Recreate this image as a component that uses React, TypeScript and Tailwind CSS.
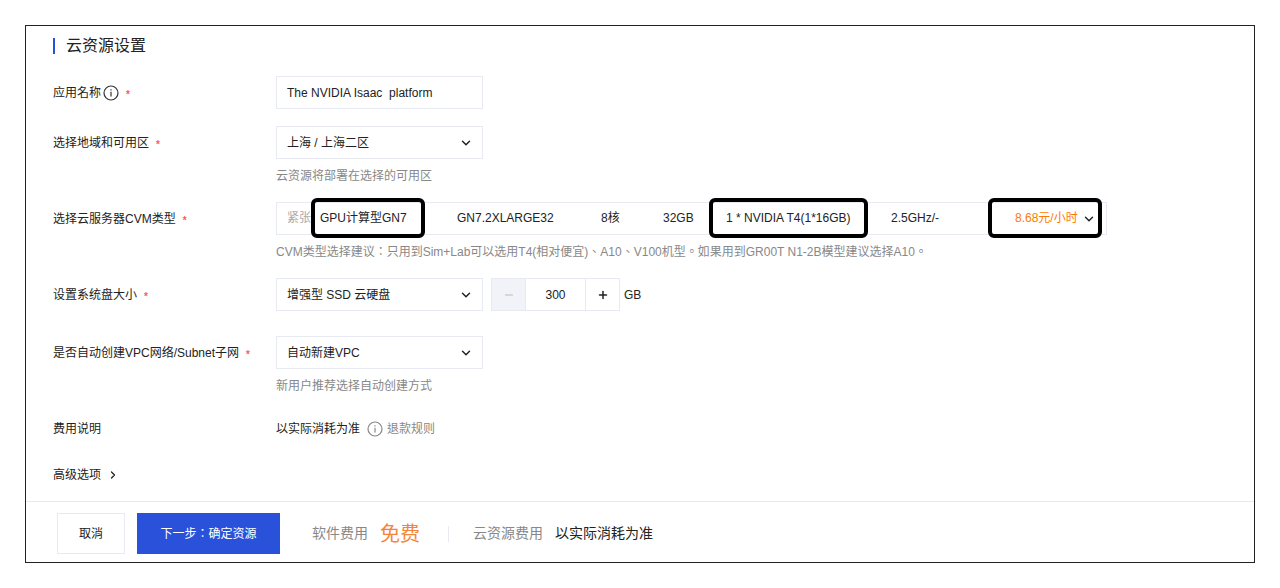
import { useState } from 'react';
import type { ReactNode } from 'react';
import { ChevronDown, ChevronRight, Minus, Plus } from 'lucide-react';

const BOX = 'h-[33px] border border-[#e7eaf2] bg-white';

function InfoIcon({ className }: { className: string }) {
  return (
    <svg viewBox="0 0 16 16" className={className} fill="none" stroke="currentColor" aria-hidden="true">
      <circle cx="8" cy="8" r="7" strokeWidth="1.2" />
      <path d="M8 6.8V11.6" strokeWidth="1.2" />
      <path d="M8 4.3V5.6" strokeWidth="1.2" />
    </svg>
  );
}

interface RowProps {
  label: string;
  htmlFor?: string;
  required?: boolean;
  info?: boolean;
  hint?: string;
  className?: string;
  children: ReactNode;
}

function Row({ label, htmlFor, required, info, hint, className = '', children }: RowProps) {
  return (
    <div className={`grid grid-cols-[223px_1fr] ${className}`}>
      <div className="flex h-[33px] items-center">
        {htmlFor ? <label htmlFor={htmlFor}>{label}</label> : <span>{label}</span>}
        {info && <InfoIcon className="ml-[2px] size-4 text-[#333]" />}
        {required && <span className="ml-[7px] pt-1 text-[10px] font-bold text-[#ff5a4f]">*</span>}
      </div>
      <div>
        <div className="flex min-h-[33px] items-center">{children}</div>
        {hint && <p className="mt-2 leading-[18px] text-[#888]">{hint}</p>}
      </div>
    </div>
  );
}

function Select({ id, options }: { id: string; options: string[] }) {
  return (
    <div className="relative w-[207px]">
      <select id={id} className={`${BOX} w-full appearance-none pr-8 pl-[10px]`}>
        {options.map((option) => (
          <option key={option}>{option}</option>
        ))}
      </select>
      <ChevronDown
        className="pointer-events-none absolute top-[10px] right-[10px] size-[14px]"
        strokeWidth={2.5}
      />
    </div>
  );
}

function Highlight({ className }: { className: string }) {
  return (
    <span
      className={`pointer-events-none absolute -top-1 h-10 rounded-md border-4 border-black ${className}`}
    />
  );
}

function InstancePicker() {
  return (
    <button
      id="cvm"
      type="button"
      aria-haspopup="listbox"
      className={`${BOX} grid w-full max-w-[831px] grid-cols-[33px_137px_144px_62px_63px_165px_124px_1fr] pl-[10px] text-left leading-[31px] whitespace-nowrap`}
    >
      <span className="text-[#aaa]">紧张</span>
      <span className="relative -my-px leading-[33px]">
        GPU计算型GN7
        <Highlight className="-left-[9px] w-[114px]" />
      </span>
      <span>GN7.2XLARGE32</span>
      <span>8核</span>
      <span>32GB</span>
      <span className="relative -my-px leading-[33px]">
        1 * NVIDIA T4(1*16GB)
        <Highlight className="-left-[17px] w-[159px]" />
      </span>
      <span>2.5GHz/-</span>
      <span className="relative -my-px flex items-center justify-between pr-[10px] leading-[33px] text-[#ff7a00]">
        8.68元/小时
        <ChevronDown className="size-[14px] text-[#222]" strokeWidth={2.5} />
        <Highlight className="right-1 w-[114px]" />
      </span>
    </button>
  );
}

function DiskSize() {
  const [size, setSize] = useState(300);

  return (
    <div className={`${BOX} ml-2 flex w-[129px]`}>
      <button
        type="button"
        aria-label="-"
        onClick={() => setSize(Math.max(300, size - 10))}
        className="flex w-[33px] items-center justify-center bg-[#f2f3f8] text-[#bbb]"
      >
        <Minus className="size-3" />
      </button>
      <input
        aria-label="GB"
        value={size}
        onChange={(e) => setSize(Number(e.target.value) || 0)}
        className="w-[61px] border-x border-[#e7eaf2] text-center"
      />
      <button
        type="button"
        aria-label="+"
        onClick={() => setSize(size + 10)}
        className="flex flex-1 items-center justify-center"
      >
        <Plus className="size-3" strokeWidth={3} />
      </button>
    </div>
  );
}

export default function App() {
  return (
    <main className="m-[25px] border border-[#222] bg-white font-['Liberation_Sans','Noto_Sans_CJK_TC',sans-serif] text-[12px] text-[#222]">
      <form className="px-[27px] pt-2 pb-[13px]">
        <h1 className="flex items-center text-[16px] leading-6">
          <span className="mr-[11px] h-4 w-[2px] bg-[#2450dc]" />
          云资源设置
        </h1>

        <div className="mt-[18px] flex flex-col gap-[17px]">
          <Row label="应用名称" htmlFor="name" info required>
            <input
              id="name"
              defaultValue="The NVIDIA Isaac  platform"
              className={`${BOX} w-[207px] px-[10px]`}
            />
          </Row>
          <Row label="选择地域和可用区" htmlFor="zone" required hint="云资源将部署在选择的可用区">
            <Select id="zone" options={['上海 / 上海二区']} />
          </Row>
          <Row
            label="选择云服务器CVM类型"
            htmlFor="cvm"
            required
            hint="CVM类型选择建议：只用到Sim+Lab可以选用T4(相对便宜)、A10、V100机型。如果用到GR00T N1-2B模型建议选择A10。"
          >
            <InstancePicker />
          </Row>
          <Row label="设置系统盘大小" htmlFor="disk" required>
            <Select id="disk" options={['增强型 SSD 云硬盘']} />
            <DiskSize />
            <span className="ml-1">GB</span>
          </Row>
          <Row
            label="是否自动创建VPC网络/Subnet子网"
            htmlFor="vpc"
            required
            hint="新用户推荐选择自动创建方式"
            className="mt-2"
          >
            <Select id="vpc" options={['自动新建VPC']} />
          </Row>
          <Row label="费用说明">
            <span>以实际消耗为准</span>
            <a href="#refund" className="ml-[7px] flex items-center gap-1 text-[#888]">
              <InfoIcon className="size-4" />
              退款规则
            </a>
          </Row>
          <button type="button" className="flex h-[26px] items-center gap-[6px] self-start">
            高级选项
            <ChevronRight className="size-3" strokeWidth={2.5} />
          </button>
        </div>
      </form>

      <footer className="flex items-center border-t border-[#e8e8ea] pt-[11px] pr-[27px] pb-2 pl-[31px] text-[14px]">
        <button type="button" className="h-[41px] w-[68px] border border-[#e7eaf2] text-[12px]">
          取消
        </button>
        <button type="button" className="ml-3 h-[41px] w-[143px] bg-[#2951da] text-[12px] text-white">
          下一步：确定资源
        </button>
        <span className="ml-8 text-[#888]">软件费用</span>
        <span className="ml-3 text-[20px] leading-6 text-[#f58535]">免费</span>
        <span className="mr-6 ml-7 h-4 w-px bg-[#e7eaf2]" />
        <span className="text-[#888]">云资源费用</span>
        <span className="ml-3">以实际消耗为准</span>
      </footer>
    </main>
  );
}
